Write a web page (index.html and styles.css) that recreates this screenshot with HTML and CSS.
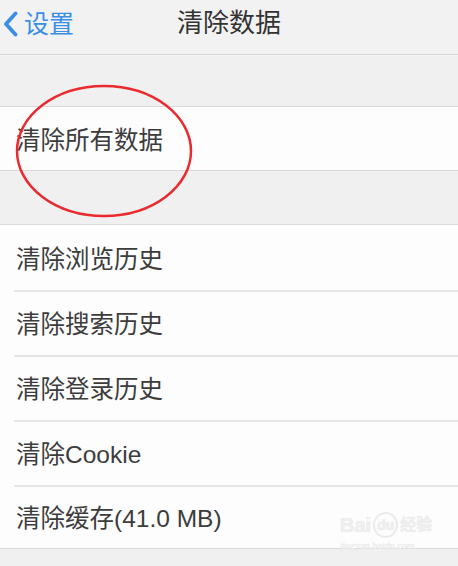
FILE: index.html
```html
<!DOCTYPE html>
<html lang="zh-CN">
<head>
    <meta charset="UTF-8">
    <meta name="viewport" content="width=device-width, initial-scale=1.0">
    <title>清除数据</title>
    <link rel="stylesheet" href="styles.css">
</head>
<body>
    <div class="screen">
        <div class="nav-bar">
            <a class="back" href="#">
                <svg class="chevron" width="16" height="26" viewBox="0 0 16 26">
                    <path d="M13.5 2.5 L4 13 L13.5 23.5" fill="none" stroke="#3a8ee6" stroke-width="3.8" stroke-linecap="round" stroke-linejoin="round"/>
                </svg>
                <span>设置</span>
            </a>
            <h1 class="title">清除数据</h1>
        </div>

        <div class="spacer spacer-top"></div>

        <div class="group">
            <div class="row">清除所有数据</div>
        </div>

        <div class="spacer"></div>

        <div class="group">
            <div class="row">清除浏览历史</div>
            <div class="row">清除搜索历史</div>
            <div class="row">清除登录历史</div>
            <div class="row">清除Cookie</div>
            <div class="row">清除缓存(41.0 MB)</div>
        </div>

        <svg class="circle-mark" width="200" height="150" viewBox="0 0 200 150">
            <ellipse cx="95" cy="70" rx="87" ry="65" fill="none" stroke="#ea2a2e" stroke-width="2.5"/>
        </svg>

        <div class="watermark">
            <div class="wm-top"><span class="wm-bai">Bai</span><span class="wm-du">du</span><span class="wm-cn">经验</span></div>
            <div class="wm-url">jingyan.baidu.com</div>
        </div>
    </div>
</body>
</html>
```

FILE: styles.css
```css
* {
    box-sizing: border-box;
}
body {
    margin: 0;
    padding: 0;
    background-color: #f0f0f0;
    font-family: "Liberation Sans", "Noto Sans CJK SC", sans-serif;
    color: #383838;
}
.screen {
    position: relative;
    width: 458px;
    height: 566px;
    overflow: hidden;
    background-color: #f0f0f0;
}
.nav-bar {
    position: relative;
    height: 55px;
    display: flex;
    align-items: center;
    justify-content: center;
    background-color: #f2f2f2;
    border-bottom: 1px solid #d9d9d9;
}
.back {
    position: absolute;
    left: 2px;
    top: 10px;
    display: flex;
    align-items: center;
    gap: 6px;
    color: #3a8ee6;
    text-decoration: none;
    font-size: 25px;
    line-height: 28px;
}
.title {
    margin: 0 0 8px 0;
    font-size: 26px;
    font-weight: normal;
    color: #333;
    line-height: 30px;
}
.spacer {
    height: 53px;
}
.spacer-top {
    height: 51px;
}
.group {
    background-color: #fdfdfd;
    border-top: 1px solid #d9d9d9;
    border-bottom: 1px solid #d9d9d9;
}
.row {
    position: relative;
    height: 65px;
    padding-left: 16px;
    display: flex;
    align-items: center;
    font-size: 24.5px;
    color: #3c3c3c;
}
.row:last-child {
    height: 63px;
}
.row + .row::before {
    content: "";
    position: absolute;
    left: 14px;
    right: 0;
    top: 0;
    border-top: 2px solid #e6e6e6;
}
.circle-mark {
    position: absolute;
    left: 9px;
    top: 81px;
}
.watermark {
    position: absolute;
    left: 340px;
    top: 512px;
    color: #efefef;
    text-shadow: 0 0 1px #dcdcdc;
}
.wm-top {
    display: flex;
    align-items: center;
    font-size: 20px;
    font-weight: bold;
    line-height: 22px;
}
.wm-du {
    font-size: 14px;
    border: 2px solid #ebebeb;
    border-radius: 50%;
    padding: 0 2px;
    margin: 0 2px;
}
.wm-cn {
    font-size: 16px;
}
.wm-url {
    font-size: 10px;
    font-family: "Liberation Serif", serif;
    margin-top: 2px;
}
```
